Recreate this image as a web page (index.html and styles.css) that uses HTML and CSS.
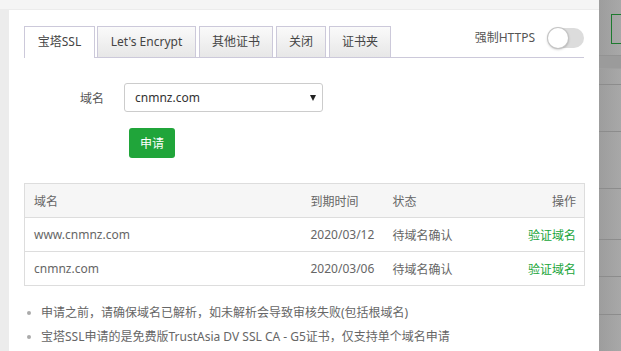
FILE: index.html
```html
<!DOCTYPE html>
<html lang="zh-CN">
<head>
<meta charset="utf-8">
<title>SSL</title>
<link rel="stylesheet" href="styles.css">
</head>
<body>
<div class="page">
  <div class="top"></div>
  <div class="left"></div>
  <main class="panel">
    <div class="tabs">
      <div class="tab tab-bt active">宝塔SSL</div>
      <div class="tab tab-le">Let's Encrypt</div>
      <div class="tab tab-other">其他证书</div>
      <div class="tab tab-close">关闭</div>
      <div class="tab tab-folder">证书夹</div>
      <div class="force">
        <span class="force-label">强制HTTPS</span>
        <span class="switch"><span class="knob"></span></span>
      </div>
    </div>
    <div class="form-row">
      <span class="label">域名</span>
      <div class="select"><span>cnmnz.com</span><span class="arrow"></span></div>
    </div>
    <button class="btn">申请</button>
    <table class="list">
      <colgroup><col class="c1"><col class="c2"><col class="c3"><col class="c4"></colgroup>
      <thead>
        <tr><th>域名</th><th>到期时间</th><th>状态</th><th class="r">操作</th></tr>
      </thead>
      <tbody>
        <tr><td>www.cnmnz.com</td><td>2020/03/12</td><td>待域名确认</td><td class="r"><a class="link">验证域名</a></td></tr>
        <tr><td>cnmnz.com</td><td>2020/03/06</td><td>待域名确认</td><td class="r"><a class="link">验证域名</a></td></tr>
      </tbody>
    </table>
    <ul class="tips">
      <li>申请之前，请确保域名已解析，如未解析会导致审核失败(包括根域名)</li>
      <li>宝塔SSL申请的是免费版TrustAsia DV SSL CA - G5证书，仅支持单个域名申请</li>
    </ul>
  </main>
  <aside class="behind">
    <div class="b-top"></div>
    <div class="b-box"></div>
    <div class="b-gap"></div>
    <div class="b-band"></div>
    <div class="b-row h16"></div>
    <div class="b-row h47"></div>
    <div class="b-row h57"></div>
    <div class="b-row h51"></div>
    <div class="b-row h37"></div>
    <div class="b-row h38"></div>
    <div class="b-row h37"></div>
  </aside>
</div>
</body>
</html>
```

FILE: styles.css
```css
* { box-sizing: border-box; }
html, body { margin: 0; padding: 0; }
body {
  width: 621px;
  height: 351px;
  overflow: hidden;
  font-family: "Noto Sans", "Noto Sans CJK SC", sans-serif;
  font-size: 12px;
  color: #555;
}
.page {
  display: grid;
  grid-template-columns: 9px 590px 22px;
  grid-template-rows: 10px 341px;
  height: 351px;
}
.top { grid-column: 1 / 3; grid-row: 1; background: #f5f5f5; border-bottom: 1px solid #ececec; }
.left { grid-column: 1; grid-row: 2; background: #ececec; }
.panel {
  grid-column: 2;
  grid-row: 2;
  background: #fff;
  padding: 16px 15px 0 15px;
  overflow: hidden;
}
.tabs {
  display: flex;
  align-items: flex-end;
  height: 32px;
  border-bottom: 1px solid #ccc9da;
}
.tab {
  flex: none;
  height: 31px;
  line-height: 30px;
  padding: 0;
  text-align: center;
  margin-right: 3px;
  border: 1px solid #ccc9da;
  border-bottom: none;
  background: linear-gradient(#fafafa, #e7e7e7);
  color: #444;
  white-space: nowrap;
}
.tab-bt { width: 71px; margin-right: 2px; }
.tab-le { width: 99px; }
.tab-other { width: 74px; }
.tab-close { width: 50px; }
.tab-folder { width: 62px; }
.tab.active {
  height: 32px;
  margin-bottom: -1px;
  background: #fff;
}
.force {
  margin-left: auto;
  align-self: flex-start;
  margin-top: 2px;
  display: flex;
  align-items: center;
  gap: 13px;
}
.force-label { color: #555; line-height: 20px; }
.switch {
  display: flex;
  width: 36px;
  height: 20px;
  border-radius: 10px;
  background: #dcdcdc;
}
.knob {
  width: 20px;
  height: 20px;
  border-radius: 50%;
  background: #fff;
  box-shadow: 0 0 0 1px #c4c4c4, 0 1px 3px rgba(0,0,0,.4);
}
.form-row {
  display: flex;
  align-items: center;
  margin-top: 25px;
}
.label {
  width: 80px;
  text-align: right;
  margin-right: 20px;
  color: #555;
}
.select {
  width: 199px;
  height: 29px;
  border: 1px solid #ccc;
  border-radius: 3px;
  display: flex;
  align-items: center;
  padding: 0 6px 0 10px;
  color: #333;
}
.arrow {
  margin-left: auto;
  width: 0;
  height: 0;
  border-left: 3px solid transparent;
  border-right: 3px solid transparent;
  border-top: 6px solid #222;
}
.btn {
  display: block;
  margin: 16px 0 0 105px;
  width: 46px;
  height: 30px;
  border: none;
  border-radius: 3px;
  background: #20a53a;
  color: #fff;
  font-family: inherit;
  font-size: 12px;
  padding: 0;
}
.list {
  margin-top: 25px;
  width: 560px;
  border-collapse: collapse;
  table-layout: fixed;
  border: 1px solid #ddd;
  color: #666;
}
.c1 { width: 277px; }
.c2 { width: 82px; }
.c3 { width: 100px; }
.c4 { width: 101px; }
.list th, .list td {
  height: 34px;
  padding: 0 9px;
  text-align: left;
  font-weight: normal;
  border-bottom: 1px solid #ddd;
  white-space: nowrap;
}
.list th { background: #f6f6f6; }
.list .r { text-align: right; padding-right: 8px; }
.link { color: #20a53a; }
.tips {
  list-style: none;
  margin: 15px 0 0;
  padding: 0;
  color: #666;
}
.tips li {
  display: flex;
  align-items: center;
  line-height: 24px;
  white-space: nowrap;
}
.tips li::before {
  content: "";
  width: 4px;
  height: 4px;
  border-radius: 50%;
  background: #aaa;
  margin: 0 10px 0 3px;
  flex: none;
}
.behind {
  grid-column: 3;
  grid-row: 1 / 3;
  background: linear-gradient(to right, #9d9d9d, #a8a8a8);
  display: flex;
  flex-direction: column;
}
.b-top { height: 14px; flex: none; }
.b-box {
  height: 30px;
  flex: none;
  margin-left: 12px;
  border: 1px solid #1e7a2f;
  border-right: none;
}
.b-gap { height: 11px; flex: none; }
.b-band { height: 13px; flex: none; background: #9b9b9b; border-top: 1px solid #939393; }
.b-row { flex: none; border-top: 1px solid #8c8c8c; }
.b-row.h16 { height: 16px; border-top-color: #a0a0a0; }
.h47 { height: 47px; }
.h57 { height: 57px; }
.h51 { height: 51px; }
.h37 { height: 37px; }
.h38 { height: 38px; }
```
